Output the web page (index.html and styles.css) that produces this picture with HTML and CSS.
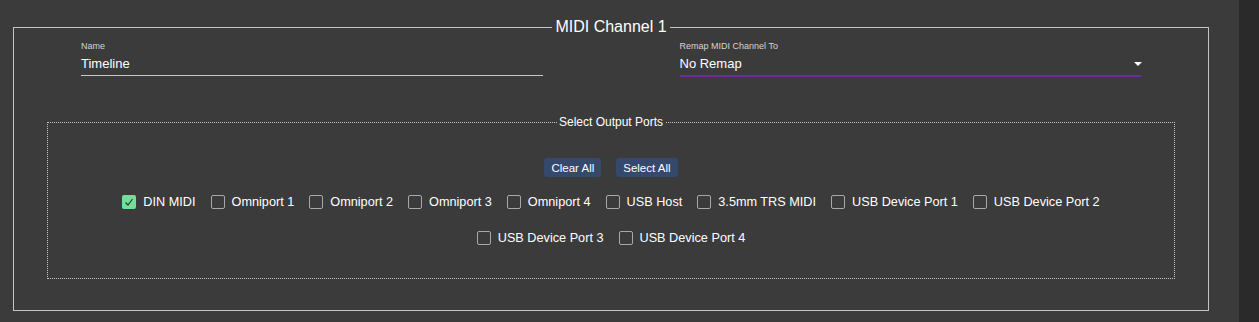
FILE: index.html
```html
<!DOCTYPE html>
<html lang="en">
<head>
    <meta charset="UTF-8">
    <meta name="viewport" content="width=device-width, initial-scale=1.0">
    <title>MIDI Channel 1</title>
    <link rel="stylesheet" href="styles.css">
</head>
<body>
    <div class="main">
        <fieldset class="channel">
            <legend>MIDI Channel 1</legend>
            <div class="fields">
                <div class="field">
                    <div class="field-label">Name</div>
                    <div class="field-value">Timeline</div>
                </div>
                <div class="field field-select">
                    <div class="field-label">Remap MIDI Channel To</div>
                    <div class="field-value">
                        <span>No Remap</span>
                        <svg class="arrow" viewBox="0 0 8 4"><polygon points="0,0 8,0 4,4" /></svg>
                    </div>
                </div>
            </div>

            <fieldset class="ports">
                <legend>Select Output Ports</legend>
                <div class="actions">
                    <button class="btn">Clear All</button>
                    <button class="btn">Select All</button>
                </div>
                <div class="port-list">
                    <label class="port"><span class="box checked"><svg viewBox="0 0 14 14"><polyline points="3.5,7.5 6,10 10.5,4" /></svg></span>DIN MIDI</label>
                    <label class="port"><span class="box"></span>Omniport 1</label>
                    <label class="port"><span class="box"></span>Omniport 2</label>
                    <label class="port"><span class="box"></span>Omniport 3</label>
                    <label class="port"><span class="box"></span>Omniport 4</label>
                    <label class="port"><span class="box"></span>USB Host</label>
                    <label class="port"><span class="box"></span>3.5mm TRS MIDI</label>
                    <label class="port"><span class="box"></span>USB Device Port 1</label>
                    <label class="port"><span class="box"></span>USB Device Port 2</label>
                    <label class="port"><span class="box"></span>USB Device Port 3</label>
                    <label class="port"><span class="box"></span>USB Device Port 4</label>
                </div>
            </fieldset>
        </fieldset>
    </div>
    <div class="sidebar"></div>
</body>
</html>
```

FILE: styles.css
```css
body {
    margin: 0;
    display: flex;
    height: 100vh;
    font-family: "Liberation Sans", Arial, sans-serif;
    background-color: #3b3b3b;
    color: #fff;
    overflow: hidden;
}
.main {
    flex: 1;
    padding: 18px 30px 0 13px;
}
.sidebar {
    width: 20px;
    background-color: #2a2a2a;
}
.channel {
    margin: 0;
    padding: 0 0 31px 0;
    border: 1px solid #c4c4c4;
}
.channel > legend {
    margin: 0 auto;
    padding: 0 3px;
    font-size: 16px;
    line-height: 18px;
}
.fields {
    display: grid;
    grid-template-columns: 1fr 1fr;
    column-gap: 137px;
    align-items: start;
    padding: 5px 67px 0 67px;
}
.field-label {
    font-size: 9px;
    line-height: 11px;
    color: #d4d4d4;
    margin-bottom: 3px;
}
.field-value {
    display: flex;
    align-items: center;
    justify-content: space-between;
    font-size: 13px;
    line-height: 16px;
    padding-top: 1px;
    padding-bottom: 3px;
    border-bottom: 1px solid #c8c8c8;
}
.field-select .field-value {
    border-bottom: 2px solid #6a2ca0;
}
.arrow {
    width: 8px;
    height: 4px;
    fill: #fff;
    margin-right: -1px;
}
.ports {
    margin: 38px 33px 0 33px;
    padding: 29px 0 31px 0;
    border: 1px dotted #c4c4c4;
}
.ports > legend {
    margin: 0 auto;
    padding: 0 2px;
    font-size: 12px;
    line-height: 14px;
}
.actions {
    display: flex;
    justify-content: center;
    gap: 15px;
}
.btn {
    font-family: inherit;
    font-size: 11.5px;
    height: 19px;
    padding: 0 7px;
    border: none;
    border-radius: 3px;
    background-color: #35496d;
    color: #fff;
}
.port-list {
    display: flex;
    flex-wrap: wrap;
    justify-content: center;
    column-gap: 15px;
    row-gap: 18px;
    margin-top: 16px;
    padding: 0 60px;
}
.port {
    display: flex;
    align-items: center;
    gap: 7px;
    font-size: 12.7px;
    line-height: 18px;
}
.box {
    box-sizing: border-box;
    width: 14px;
    height: 14px;
    border: 1px solid #a8a8a8;
    border-radius: 2px;
}
.box.checked {
    border: none;
    background-color: #72e09a;
}
.box svg {
    display: block;
    width: 14px;
    height: 14px;
    fill: none;
    stroke: #2e3a30;
    stroke-width: 1.2;
}
```
